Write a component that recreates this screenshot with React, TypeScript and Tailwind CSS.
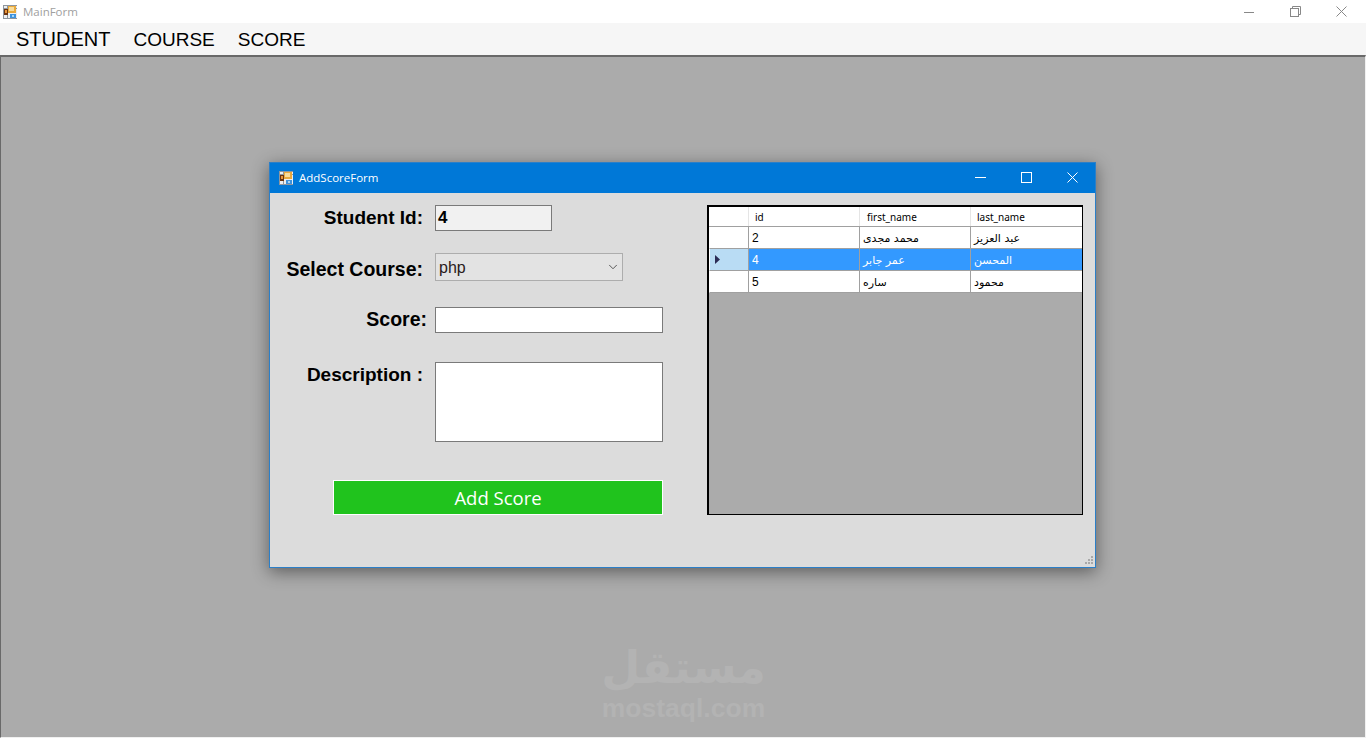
import { ChevronDown } from "lucide-react";

const students = [
  { id: "2", first: "محمد مجدى", last: "عبد العزيز" },
  { id: "4", first: "عمر جابر", last: "المحسن", selected: true },
  { id: "5", first: "ساره", last: "محمود" },
];

// Default WinForms window icon
function FormIcon() {
  return (
    <svg width="14" height="14" viewBox="0 0 14 14" className="shrink-0">
      <rect x="0" y="0" width="14" height="14" fill="#eceef0" />
      <path d="M0.5 0 V14 M4.5 0 V14 M0 0.5 H14 M0 3.5 H14 M0 13.5 H14" stroke="#8e969e" />
      <rect x="1" y="4" width="4" height="6" fill="#6b3410" />
      <rect x="2" y="5" width="2" height="3" fill="#e8953a" />
      <rect x="5" y="1" width="8" height="7" fill="#e9a93c" />
      <rect x="6" y="2" width="5" height="4" fill="#f8dc9a" />
      <rect x="7" y="9" width="6" height="4" fill="#3f93dc" />
      <rect x="9" y="10" width="2" height="2" fill="#a9d4f4" />
    </svg>
  );
}

function Grip() {
  return (
    <svg width="10" height="10" viewBox="0 0 10 10" fill="#a9a9a9" className="absolute bottom-[1px] right-[1px]">
      <rect x="7" y="0" width="2" height="2" />
      <rect x="4" y="3" width="2" height="2" />
      <rect x="7" y="3" width="2" height="2" />
      <rect x="1" y="6" width="2" height="2" />
      <rect x="4" y="6" width="2" height="2" />
      <rect x="7" y="6" width="2" height="2" />
    </svg>
  );
}

function StudentRow({ id, first, last, selected }: { id: string; first: string; last: string; selected?: boolean }) {
  const cell = selected ? "bg-[#3399ff] text-white" : "bg-white text-black";
  return (
    <div className="flex h-[22px] font-['DejaVu_Sans',sans-serif] text-[11px] leading-[23px]">
      <div className={`flex w-[40px] items-center border-r border-b border-l border-r-[#a0a0a0] border-b-[#a0a0a0] border-l-white pl-[5px] ${selected ? "bg-[#b9dcf4]" : "bg-white"}`}>
        {selected && (
          <svg width="6" height="9" viewBox="0 0 6 9">
            <path d="M0 0 L5 4.5 L0 9 Z" fill="#2b2b55" />
          </svg>
        )}
      </div>
      <div className={`w-[111px] border-r border-b border-[#a0a0a0] pl-[3px] font-['Liberation_Sans',sans-serif] text-[12px] ${cell}`}>{id}</div>
      <div className={`w-[111px] border-r border-b border-[#a0a0a0] pl-[3px] ${cell}`}>
        <span dir="rtl">{first}</span>
      </div>
      <div className={`w-[111px] border-b border-[#a0a0a0] pl-[3px] ${cell}`}>
        <span dir="rtl">{last}</span>
      </div>
    </div>
  );
}

function AddScoreForm() {
  return (
    <div className="absolute left-[268px] top-[105px] flex h-[406px] w-[827px] flex-col border border-[#2b7fc8] bg-[#dcdcdc] shadow-[0_4px_16px_rgba(0,0,0,0.45)]">
      <div className="flex h-[30px] items-center bg-[#0078d7] pl-[9px] text-white">
        <FormIcon />
        <span className="ml-[6px] font-['Open_Sans',sans-serif] text-[11.5px]">AddScoreForm</span>
        <div className="mb-[2px] ml-auto flex items-center">
          <svg width="11" height="11" viewBox="0 0 11 11" className="mr-[35px]">
            <path d="M0 5.5 H11" stroke="#fff" />
          </svg>
          <svg width="11" height="11" viewBox="0 0 11 11" className="mr-[35px]">
            <rect x="0.5" y="0.5" width="10" height="10" fill="none" stroke="#fff" />
          </svg>
          <svg width="11" height="11" viewBox="0 0 11 11" className="mr-[17px]">
            <path d="M0.5 0.5 L10.5 10.5 M10.5 0.5 L0.5 10.5" stroke="#fff" />
          </svg>
        </div>
      </div>

      <div className="relative flex flex-1 pt-[12px]">
        <div className="flex w-[393px] flex-col items-end font-['Liberation_Sans',sans-serif] font-bold text-black">
          <div className="flex h-[26px] w-full items-center">
            <label className="w-[153px] text-right text-[19px]">Student Id:</label>
            <div className="ml-[12px] h-[26px] w-[117px] border border-[#7a7a7a] bg-[#f1f1f1] pl-[2px] text-[17px] leading-[24px]">4</div>
          </div>
          <div className="mt-[22px] flex h-[28px] w-full items-center">
            <label className="w-[153px] pt-[5px] text-right text-[19.5px] whitespace-nowrap">Select Course:</label>
            <div className="ml-[12px] flex h-[28px] w-[188px] items-center justify-between border border-[#adadad] bg-[#e3e3e3] pl-[3px] pr-[2px] text-[16px] font-normal text-[#2a1a1a]">
              <span className="pt-[1px]">php</span>
              <ChevronDown size={14} strokeWidth={1.5} color="#444" />
            </div>
          </div>
          <div className="mt-[26px] flex h-[26px] w-full items-center">
            <label className="w-[157px] text-right text-[19.5px]">Score:</label>
            <input className="ml-[8px] h-[26px] w-[228px] border border-[#7a7a7a] bg-white" />
          </div>
          <div className="mt-[29px] flex h-[80px] w-full items-start">
            <label className="w-[153px] pt-[1px] text-right text-[19px] leading-[24px]">Description :</label>
            <textarea className="ml-[12px] h-[80px] w-[228px] resize-none border border-[#7a7a7a] bg-white" />
          </div>
          <button className="mt-[38px] h-[35px] w-[330px] border border-white bg-[#20c31d] pt-[1px] font-['Open_Sans',sans-serif] text-[18.5px] font-normal text-white">
            Add Score
          </button>
        </div>

        <div className="ml-[44px] flex h-[310px] w-[376px] flex-col border border-t-2 border-l-2 border-black bg-[#ababab]">
          <div className="flex h-[20px] border-b border-[#a0a0a0] bg-white font-['Noto_Sans',sans-serif] text-[10px] leading-[21px] text-black">
            <div className="w-[40px] border-r border-[#e5e5e5]" />
            <div className="w-[111px] border-r border-[#e5e5e5] pl-[6px]">id</div>
            <div className="w-[111px] border-r border-[#e5e5e5] pl-[7px]">first_name</div>
            <div className="w-[111px] pl-[6px]">last_name</div>
          </div>
          {students.map((s) => (
            <StudentRow key={s.id} {...s} />
          ))}
        </div>
        <Grip />
      </div>
    </div>
  );
}

export default function App() {
  return (
    <div className="flex h-[738px] w-[1366px] flex-col overflow-hidden bg-white font-['Liberation_Sans',sans-serif]">
      <div className="flex h-[23px] items-center bg-white pl-[3px]">
        <FormIcon />
        <span className="ml-[6px] font-['Open_Sans',sans-serif] text-[11.5px] text-[#a0a0a0]">MainForm</span>
        <div className="ml-auto flex items-center">
          <svg width="10" height="10" viewBox="0 0 10 10" className="mr-[36px]">
            <path d="M0 5.5 H10" stroke="#888" />
          </svg>
          <svg width="11" height="11" viewBox="0 0 11 11" className="mr-[35px]">
            <rect x="0.5" y="2.5" width="8" height="8" fill="none" stroke="#888" />
            <path d="M2.5 2.5 V0.5 H10.5 V8.5 H8.5" fill="none" stroke="#888" />
          </svg>
          <svg width="11" height="11" viewBox="0 0 11 11" className="mr-[19px]">
            <path d="M0.5 0.5 L10.5 10.5 M10.5 0.5 L0.5 10.5" stroke="#888" />
          </svg>
        </div>
      </div>

      <div className="flex h-[32px] items-center bg-[#f6f6f6] pl-[16px] text-black">
        <span className="text-[20px]">STUDENT</span>
        <span className="ml-[23px] pt-[2px] text-[19px]">COURSE</span>
        <span className="ml-[23px] pt-[2px] text-[19px]">SCORE</span>
      </div>

      <div className="relative flex-1 border-t-2 border-l border-r border-b border-t-[#696969] border-l-[#696969] border-r-[#f0f0f0] border-b-[#f0f0f0] bg-[#ababab]">
        <AddScoreForm />
        {/* mostaql watermark */}
        <div className="absolute left-[600px] top-[582px] flex w-[165px] flex-col items-center text-[#b3b3b3]">
          <span dir="rtl" className="h-[58px] font-['DejaVu_Sans',sans-serif] text-[45px] font-bold leading-[58px]">
            مستقل
          </span>
          <span className="font-['Liberation_Sans',sans-serif] text-[26.5px] font-bold leading-[22px]">mostaql.com</span>
        </div>
      </div>
    </div>
  );
}
